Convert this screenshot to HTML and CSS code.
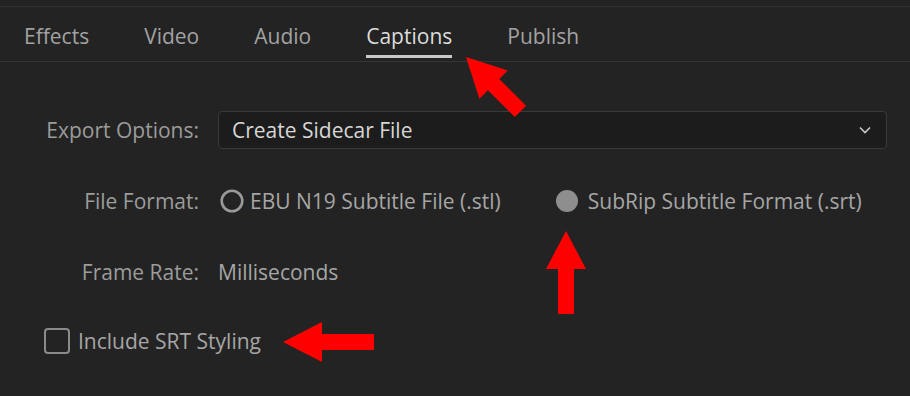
FILE: index.html
```html
<!DOCTYPE html>
<html lang="en">
<head>
    <meta charset="UTF-8">
    <meta name="viewport" content="width=device-width, initial-scale=1.0">
    <title>Captions</title>
    <link rel="stylesheet" href="styles.css">
</head>
<body>
    <div class="panel">
        <!-- Tabs -->
        <div class="tabs">
            <span class="tab">Effects</span>
            <span class="tab">Video</span>
            <span class="tab">Audio</span>
            <span class="tab active">Captions</span>
            <span class="tab">Publish</span>
        </div>

        <!-- Caption settings -->
        <div class="form">
            <span class="label">Export Options:</span>
            <div class="select">
                <span>Create Sidecar File</span>
                <svg class="chevron" width="12" height="8" viewBox="0 0 12 8">
                    <polyline points="1,1.5 6,6.5 11,1.5" fill="none" stroke="#c8c8c8" stroke-width="1.6"/>
                </svg>
            </div>

            <span class="label">File Format:</span>
            <div class="radios">
                <span class="radio">
                    <svg width="24" height="24" viewBox="0 0 24 24">
                        <circle cx="12" cy="12" r="10.3" fill="none" stroke="#9a9a9a" stroke-width="2.6"/>
                    </svg>
                    EBU N19 Subtitle File (.stl)
                </span>
                <span class="radio checked">
                    <svg width="24" height="24" viewBox="0 0 24 24">
                        <circle cx="12" cy="12" r="11" fill="#8e8e8e"/>
                    </svg>
                    SubRip Subtitle Format (.srt)
                </span>
            </div>

            <span class="label">Frame Rate:</span>
            <span class="value">Milliseconds</span>
        </div>

        <div class="check">
            <span class="box"></span>
            Include SRT Styling
        </div>

        <!-- Red annotation arrows -->
        <svg class="arrows" width="910" height="396" viewBox="0 0 910 396">
            <polygon transform="translate(466,57) rotate(-45)" points="0,0 20,39 8,39 8,77 -8,77 -8,39 -20,39" fill="#ff0000"/>
            <polygon points="566,231 586,269 574,269 574,314 558,314 558,269 546,269" fill="#ff0000"/>
            <polygon points="283,342 322,322 322,334 374,334 374,350 322,350 322,362" fill="#ff0000"/>
        </svg>
    </div>
</body>
</html>
```

FILE: styles.css
```css
body {
    margin: 0;
    background-color: #232323;
    font-family: "Open Sans", "Noto Sans", sans-serif;
    font-size: 21px;
    color: #a0a0a0;
}

.panel {
    position: relative;
    width: 910px;
    height: 396px;
    overflow: hidden;
}

.tabs {
    display: flex;
    gap: 55px;
    height: 54px;
    margin-top: 6px;
    padding-left: 24px;
    border-top: 1px solid #303030;
    border-bottom: 1px solid #343434;
}

.tab {
    padding-top: 15px;
    padding-bottom: 5px;
    line-height: 28px;
    height: 28px;
    border-bottom: 3px solid transparent;
    color: #a2a2a2;
}

.tab.active {
    color: #dcdcdc;
    border-bottom-color: #c8c8c8;
}

.form {
    display: grid;
    grid-template-columns: 155px 1fr;
    grid-auto-rows: 38px;
    column-gap: 19px;
    row-gap: 33px;
    margin-top: 49px;
    padding: 0 23px 0 44px;
    align-items: center;
}

.label {
    text-align: right;
    color: #9c9c9c;
}

.select {
    display: flex;
    justify-content: space-between;
    align-items: center;
    height: 38px;
    box-sizing: border-box;
    padding: 0 15px 0 13px;
    background-color: #1c1c1c;
    border: 1px solid #3a3a3a;
    border-radius: 4px;
    color: #d6d6d6;
}

.radios {
    display: flex;
    gap: 52px;
}

.radio {
    display: flex;
    align-items: center;
    gap: 6px;
    color: #a6a6a6;
}

.radio.checked {
    gap: 9px;
}

.radio svg {
    margin-left: 2px;
}

.value {
    color: #a6a6a6;
}

.check {
    display: flex;
    align-items: center;
    gap: 8px;
    margin-top: 36px;
    padding-left: 44px;
    color: #a6a6a6;
}

.box {
    width: 26px;
    height: 26px;
    box-sizing: border-box;
    border: 2.5px solid #8a8a8a;
    border-radius: 4px;
}

.arrows {
    position: absolute;
    left: 0;
    top: 0;
    pointer-events: none;
}
```
